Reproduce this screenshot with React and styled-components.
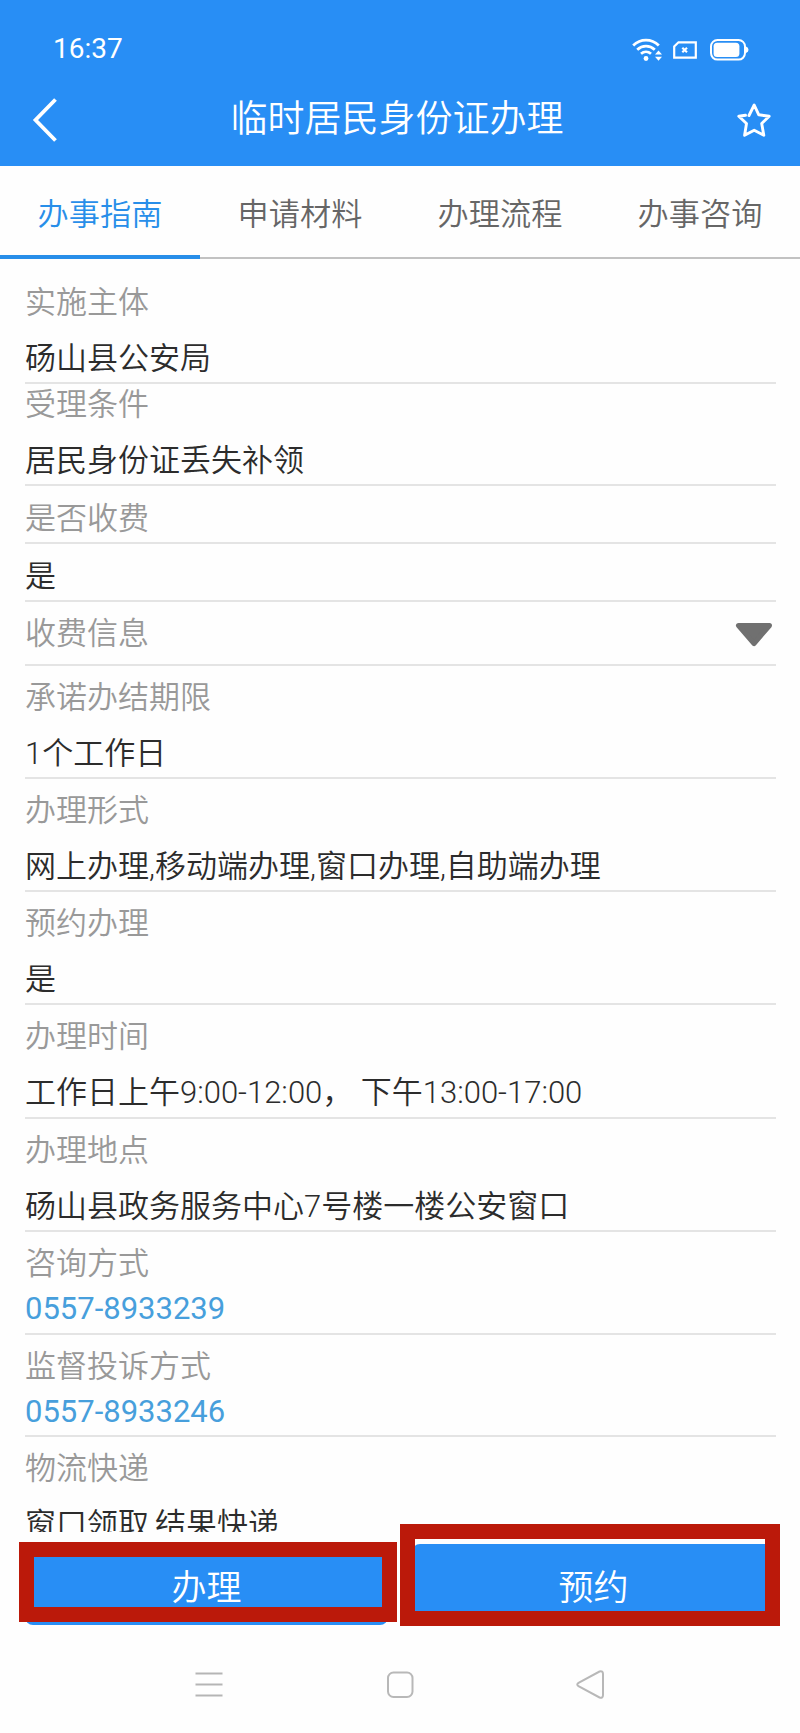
import React from "react"
import styled, { createGlobalStyle } from "styled-components"

const tabs = ["办事指南", "申请材料", "办理流程", "办事咨询"]

const fields = [
  { label: "实施主体", value: "砀山县公安局", height: 115, top: 16 },
  { label: "受理条件", value: "居民身份证丢失补领", height: 102, top: 3 },
  { label: "是否收费", height: 58, top: 15 },
  { value: "是", height: 58, top: 15 },
  { label: "收费信息", height: 64, top: 14, expandable: true },
  { label: "承诺办结期限", value: "1个工作日", height: 113.3, top: 14 },
  { label: "办理形式", value: "网上办理,移动端办理,窗口办理,自助端办理", height: 113.3, top: 14 },
  { label: "预约办理", value: "是", height: 113.4, top: 14 },
  { label: "办理时间", value: "工作日上午9:00-12:00， 下午13:00-17:00", height: 113.3, top: 14 },
  { label: "办理地点", value: "砀山县政务服务中心7号楼一楼公安窗口", height: 113.3, top: 14 },
  { label: "咨询方式", phone: "0557-8933239", height: 102.7, top: 14 },
  { label: "监督投诉方式", phone: "0557-8933246", height: 102.7, top: 14 },
  { label: "物流快递", value: "窗口领取,结果快递", height: 113.4, top: 14 },
]

function StatusIcons() {
  return (
    <svg width="120" height="28" viewBox="0 0 120 28" fill="none">
      <g stroke="#fff" strokeWidth="2.8">
        <path d="M2.2 10.5C9.5 3.3 20.500 3.3 27.800 10.500" />
        <path d="M6.200 14.700C11.300 9.900 18.700 9.900 23.800 14.700" />
        <path d="M10 18.800C13 16.200 17 16.200 20 18.800" />
      </g>
      <circle cx="15" cy="23.500" r="2.400" fill="#fff" />
      <path d="M24 19.500L27.500 15.500L31 19.500ZM24 21.800L27.500 25.800L31 21.800Z" fill="#fff" />
      <path d="M47.500 7.300H64.800V22.700H43.200V11.500Z" stroke="#fff" strokeWidth="2.200" />
      <path d="M51.300 12.800L56 17.200M56 12.800L51.300 17.200" stroke="#fff" strokeWidth="2.200" />
      <rect x="80" y="5" width="34" height="19.600" rx="6.500" stroke="#fff" strokeWidth="2" />
      <rect x="82.600" y="7.700" width="25.800" height="14.200" rx="3.500" fill="#fff" />
      <path d="M115 11.500Q117.500 12.500 117.500 14.800Q117.500 17 115 18Z" fill="#fff" />
    </svg>
  )
}

export default function App() {
  return (
    <Screen>
      <GlobalStyle />
      <Header>
        <StatusBar>
          <Clock>16:37</Clock>
          <StatusIcons />
        </StatusBar>
        <TitleBar>
          <svg width="26" height="44" viewBox="0 0 26 44" fill="none">
            <path d="M23.500 1.500L3.500 22L23.500 42.500" stroke="#fff" strokeWidth="3.800" />
          </svg>
          <h1>临时居民身份证办理</h1>
          <svg width="36" height="36" viewBox="0 0 36 36" fill="none">
            <path d="M13 13.500L18.200 3L22.800 12.800L33.200 14.300L25.700 21.500L27.800 33.300L18.200 28.300L8.600 33.300L10.500 21.500L2.800 14.300L9.500 13.300" stroke="#fff" strokeWidth="2.900" strokeLinecap="round" strokeLinejoin="round" />
          </svg>
        </TitleBar>
      </Header>
      <Tabs>
        {tabs.map((el, index) => (
          <Tab key={el} $active={index === 0}>{el}</Tab>
        ))}
      </Tabs>
      <Fields>
        {fields.map((el, index) => (
          <Field key={index} $height={el.height} $top={el.top}>
            {el.label && <Label>{el.label}</Label>}
            {el.value && <Value>{el.value}</Value>}
            {el.phone && <Phone href={`tel:${el.phone}`}>{el.phone}</Phone>}
            {el.expandable && (
              <Arrow width="38" height="25" viewBox="0 0 38 25">
                <path d="M3.500 3.500H34.500L19 21.500Z" fill="#707070" stroke="#707070" strokeWidth="5" strokeLinejoin="round" />
              </Arrow>
            )}
          </Field>
        ))}
      </Fields>
      <Actions>
        <Button>
          办理
          <Highlight $top={-2} $left={-6} $width={378} $height={80} />
        </Button>
        <Button>
          预约
          <Highlight $top={-20} $left={-12} $width={380} $height={102} />
        </Button>
      </Actions>
      <NavBar>
        <svg width="28" height="30" viewBox="0 0 28 30" fill="none">
          <path d="M0.500 3.500H27.500M0.500 14.500H27.500M0.500 25.500H27.500" stroke="#b5b5b5" strokeWidth="2" />
        </svg>
        <svg width="28" height="30" viewBox="0 0 28 30" fill="none">
          <rect x="2" y="2.500" width="24.500" height="24.500" rx="5.500" stroke="#b8b8b8" strokeWidth="2" />
        </svg>
        <svg width="28" height="30" viewBox="0 0 28 30" fill="none">
          <path d="M2.500 12.800L23.500 1.500Q27 0.500 27 4V25Q27 28.500 23.500 27.500L2.500 16.200Q0 14.500 2.500 12.800Z" stroke="#b8b8b8" strokeWidth="2" />
        </svg>
      </NavBar>
    </Screen>
  )
}

const GlobalStyle = createGlobalStyle`
  *{
    box-sizing: border-box;
  }

  body{
    margin: 0;
    background-color: #fefefe;
    font-family: Roboto, "Noto Sans CJK SC", sans-serif;
  }
`

const Screen = styled.div`
  width: 800px;
  height: 1733px;
  display: flex;
  flex-direction: column;
  overflow: hidden;
`

const Header = styled.header`
  height: 165.5px;
  flex: none;
  background-color: #288ef5;
  color: #fff;
`

const StatusBar = styled.div`
  height: 84px;
  padding: 14px 49px 0 53px;
  display: flex;
  align-items: center;
  justify-content: space-between;
`

const Clock = styled.span`
  font-size: 28px;
  line-height: 32px;
`

const TitleBar = styled.div`
  height: 72px;
  padding: 0 28px 0 32px;
  display: flex;
  align-items: center;
  justify-content: space-between;

  h1{
    margin: 0;
    font-size: 37px;
    line-height: 48px;
    font-weight: 350;
  }
`

const Tabs = styled.nav`
  height: 93px;
  flex: none;
  display: grid;
  grid-template-columns: repeat(4, 1fr);
`

const Tab = styled.div`
  display: flex;
  align-items: center;
  justify-content: center;
  padding-top: ${({ $active }) => ($active ? 2 : 0)}px;
  font-size: 31.200px;
  font-weight: 350;
  color: ${({ $active }) => ($active ? "#288ee9" : "#666")};
  border-bottom: ${({ $active }) => ($active ? "4px solid #288ee9" : "2px solid #c2c2c2")};
`

const Fields = styled.main`
  height: 1273px;
  flex: none;
  padding: 10px 24px 0 25px;
  overflow: hidden;
`

const Field = styled.section`
  position: relative;
  height: ${({ $height }) => $height}px;
  padding-top: ${({ $top }) => $top}px;
  border-bottom: 2px solid #e4e4e4;
  font-size: 31px;
  line-height: 36px;
  font-weight: 350;
`

const Label = styled.div`
  color: #999;

  & + div{
    margin-top: 20px;
  }
`

const Value = styled.div`
  color: #2c2c2c;
  white-space: pre;
`

const Phone = styled.a`
  display: block;
  margin-top: 9px;
  color: #479fdc;
  font-weight: 400;
  text-decoration: none;
`

const Arrow = styled.svg`
  position: absolute;
  right: 3px;
  top: 20px;
`

const Actions = styled.footer`
  flex: none;
  display: flex;
  gap: 24px;
  padding: 12px 25px 0;
`

const Button = styled.button`
  position: relative;
  flex: 1;
  height: 81px;
  border: 0;
  border-radius: 8px;
  background-color: #288ef5;
  color: #fff;
  font-family: inherit;
  font-size: 35px;
  font-weight: 350;
`

const Highlight = styled.span`
  position: absolute;
  top: ${({ $top }) => $top}px;
  left: ${({ $left }) => $left}px;
  width: ${({ $width }) => $width}px;
  height: ${({ $height }) => $height}px;
  border: 15px solid #bb190a;
`

const NavBar = styled.div`
  display: flex;
  justify-content: space-between;
  padding: 45px 196px 0 195px;
`
